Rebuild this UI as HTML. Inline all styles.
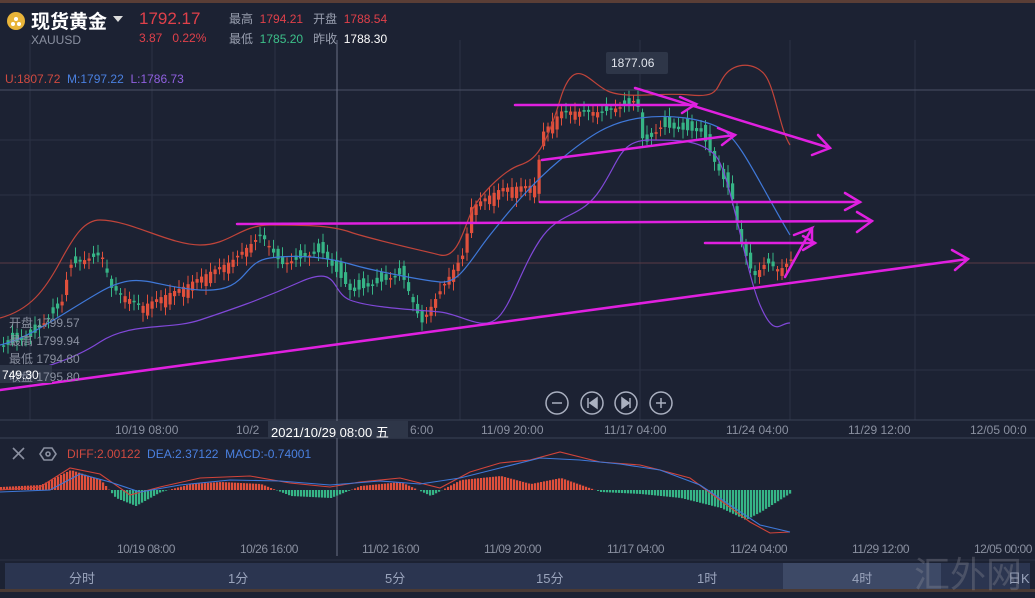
<!DOCTYPE html>
<html><head><meta charset="utf-8"><style>
body{margin:0;background:#1c2233;width:1035px;height:592px;overflow:hidden;font-family:"Liberation Sans","Noto Sans CJK SC",sans-serif;position:relative}
.t{position:absolute;white-space:nowrap}
svg{position:absolute;left:0;top:0}
</style></head><body>
<svg id="s" width="1035" height="592" xmlns="http://www.w3.org/2000/svg">
<rect x="0" y="0" width="1035" height="3" fill="#5a3e36"/>
<g stroke="#2b3245" stroke-width="1">
<line x1="0" y1="140" x2="1035" y2="140"/><line x1="0" y1="195" x2="1035" y2="195"/><line x1="0" y1="315" x2="1035" y2="315"/>
<line x1="0" y1="370" x2="1035" y2="370"/>
<line x1="30" y1="40" x2="30" y2="420"/><line x1="152" y1="40" x2="152" y2="420"/><line x1="275" y1="40" x2="275" y2="420"/><line x1="460" y1="40" x2="460" y2="420"/><line x1="640" y1="40" x2="640" y2="420"/><line x1="790" y1="40" x2="790" y2="420"/><line x1="915" y1="40" x2="915" y2="420"/>
</g>
<line x1="0" y1="90" x2="1035" y2="90" stroke="#4a5064"/>
<line x1="0" y1="263" x2="1035" y2="263" stroke="#5a3a44"/>
<line x1="0" y1="420" x2="1035" y2="420" stroke="#3a4156"/>
<line x1="0" y1="438" x2="1035" y2="438" stroke="#3a4156"/>
<line x1="0" y1="560" x2="1035" y2="560" stroke="#2b3245"/>
<line x1="337" y1="40" x2="337" y2="556" stroke="#6a7084"/>
<g id="cd"></g>
<path fill="none" stroke="#c0443a" stroke-width="1.2" d="M0,318 C30,310 45,290 60,262 S85,220 100,220 C130,220 170,245 200,245 S240,225 270,225 S330,225 350,232 S420,250 440,255 S465,220 475,205 S505,170 520,165 S545,150 560,100 S590,85 610,92 S660,92 690,95 S715,88 725,75 S755,62 765,75 S780,130 790,145"/>
<path fill="none" stroke="#3f78d8" stroke-width="1.2" d="M0,345 C30,338 60,315 100,292 S150,287 200,290 S240,262 270,258 S330,258 350,264 S420,280 440,282 S470,260 490,235 S530,185 560,160 S610,122 640,118 S700,118 720,128 S760,185 790,235"/>
<path fill="none" stroke="#8048d8" stroke-width="1.2" d="M0,378 C30,372 70,362 100,342 S170,330 200,320 S260,300 300,282 S330,292 350,300 S420,310 440,312 S480,330 495,320 S520,270 540,240 S580,220 600,190 S620,140 650,140 S700,140 715,155 S745,270 760,305 S780,322 790,323"/>
<g stroke="#e020e0" stroke-width="2.5" fill="none" stroke-linecap="round">
<line x1="0" y1="390" x2="968" y2="259"/><polyline points="952,250 968,259 955,270"/>
<line x1="515" y1="105" x2="696" y2="105"/><polyline points="680,97 696,104 682,113"/>
<line x1="635" y1="88" x2="830" y2="148"/><polyline points="818,135 830,148 812,155"/>
<line x1="542" y1="160" x2="735" y2="135"/><polyline points="718,128 735,135 722,145"/>
<line x1="540" y1="202" x2="860" y2="202"/><polyline points="845,193 860,202 845,210"/>
<line x1="237" y1="224" x2="872" y2="221"/><polyline points="857,212 872,221 857,232"/>
<line x1="705" y1="243" x2="815" y2="243"/><polyline points="803,236 815,243 803,250"/>
<polyline points="785,277 812,228 794,235"/><line x1="812" y1="228" x2="812" y2="244"/>
</g>
<g id="mh"></g>
<polyline fill="none" stroke="#d2443a" stroke-width="1.1" points="0,490 40,487 70,468 100,474 130,495 160,487 200,478 250,476 290,483 330,487 360,482 400,478 440,488 470,472 500,463 530,460 560,452 600,462 640,465 660,470 690,478 720,500 750,522 770,533 790,532"/>
<polyline fill="none" stroke="#3f78d8" stroke-width="1.1" points="0,492 50,490 80,474 110,482 140,492 180,485 230,480 280,481 330,485 380,481 420,484 460,478 500,468 540,458 580,460 620,464 660,470 700,485 730,505 760,525 790,532"/>
<g fill="none" stroke="#aab0c0" stroke-width="1.5">
<circle cx="557" cy="403" r="11"/><circle cx="592" cy="403" r="11"/><circle cx="626" cy="403" r="11"/><circle cx="661" cy="403" r="11"/>
<line x1="552" y1="403" x2="562" y2="403"/><line x1="656" y1="403" x2="666" y2="403"/><line x1="661" y1="398" x2="661" y2="408"/>
<line x1="588" y1="398" x2="588" y2="408"/><polygon points="597,398 590,403 597,408" fill="#aab0c0"/>
<line x1="630" y1="398" x2="630" y2="408"/><polygon points="622,398 629,403 622,408" fill="#aab0c0"/>
</g>
<g stroke="#8a90a0" stroke-width="1.6" fill="none"><line x1="13" y1="448" x2="24" y2="459"/><line x1="24" y1="448" x2="13" y2="459"/>
<polygon points="44,448 52,448 56,454 52,460 44,460 40,454"/><circle cx="48" cy="454" r="2"/></g>
<rect x="5" y="563" width="1025" height="26" fill="#2b3550"/>
<rect x="783" y="563" width="158" height="26" fill="#3d4966"/>
<rect x="0" y="589" width="1035" height="3" fill="#4a3a34"/>
<circle cx="16" cy="21" r="9" fill="#e8b43a"/>
<g fill="#fff"><circle cx="13" cy="24" r="2"/><circle cx="19" cy="24" r="2"/><circle cx="16" cy="19" r="2"/></g>
<polygon points="113,16 123,16 118,22" fill="#ddd"/>
<rect x="606" y="52" width="62" height="22" rx="2" fill="#2e3648"/>
<rect x="268" y="421" width="140" height="17" fill="#2e3648"/>
<rect x="0" y="365" width="52" height="18" fill="#2e3648"/>
</svg>
<div class="t" style="left:31px;top:7px;font-size:19px;color:#fff;font-weight:bold">现货黄金</div>
<div class="t" style="left:31px;top:33px;font-size:12px;color:#8a90a0">XAUUSD</div>
<div class="t" style="left:139px;top:9px;font-size:17px;color:#e0404a">1792.17</div>
<div class="t" style="left:139px;top:31px;font-size:12px;color:#e0404a">3.87&nbsp;&nbsp;&nbsp;0.22%</div>
<div class="t" style="left:229px;top:10px;font-size:12px;color:#9aa0b0">最高&nbsp;&nbsp;<span style="color:#e0404a">1794.21</span>&nbsp;&nbsp;&nbsp;开盘&nbsp;&nbsp;<span style="color:#e0404a">1788.54</span></div>
<div class="t" style="left:229px;top:30px;font-size:12px;color:#9aa0b0">最低&nbsp;&nbsp;<span style="color:#3cc08a">1785.20</span>&nbsp;&nbsp;&nbsp;昨收&nbsp;&nbsp;<span style="color:#fff">1788.30</span></div>
<div class="t" style="left:5px;top:72px;font-size:12px;color:#d04a40">U:1807.72 <span style="color:#4a80e0">&nbsp;M:1797.22</span> <span style="color:#9060e0">&nbsp;L:1786.73</span></div>
<div class="t" style="left:611px;top:56px;font-size:12px;color:#e0e4ec">1877.06</div>
<div class="t" style="left:9px;top:314px;font-size:12px;color:#8a90a0;line-height:18px">开盘 1799.57<br>最高 1799.94<br>最低 1794.80<br>收盘 1795.80</div>
<div class="t" style="left:2px;top:368px;font-size:12px;color:#fff">749.30</div>
<div class="t" style="top:423px;font-size:12px;color:#8a90a0;left:115px">10/19 08:00</div>
<div class="t" style="top:423px;font-size:12px;color:#8a90a0;left:236px">10/2</div>
<div class="t" style="top:422px;font-size:13px;color:#fff;left:271px">2021/10/29 08:00 五</div>
<div class="t" style="top:423px;font-size:12px;color:#8a90a0;left:410px">6:00</div>
<div class="t" style="top:423px;font-size:12px;color:#8a90a0;left:481px">11/09 20:00</div>
<div class="t" style="top:423px;font-size:12px;color:#8a90a0;left:604px">11/17 04:00</div>
<div class="t" style="top:423px;font-size:12px;color:#8a90a0;left:726px">11/24 04:00</div>
<div class="t" style="top:423px;font-size:12px;color:#8a90a0;left:848px">11/29 12:00</div>
<div class="t" style="top:423px;font-size:12px;color:#8a90a0;left:970px">12/05 00:0</div>
<div class="t" style="left:67px;top:447px;font-size:12px;color:#d04a40">DIFF:2.00122 <span style="color:#4a80e0">&nbsp;DEA:2.37122 &nbsp;MACD:-0.74001</span></div>
<div class="t" style="top:542px;font-size:12px;color:#8a90a0;left:117px;letter-spacing:-0.5px">10/19 08:00</div>
<div class="t" style="top:542px;font-size:12px;color:#8a90a0;left:240px;letter-spacing:-0.5px">10/26 16:00</div>
<div class="t" style="top:542px;font-size:12px;color:#8a90a0;left:362px;letter-spacing:-0.5px">11/02 16:00</div>
<div class="t" style="top:542px;font-size:12px;color:#8a90a0;left:484px;letter-spacing:-0.5px">11/09 20:00</div>
<div class="t" style="top:542px;font-size:12px;color:#8a90a0;left:607px;letter-spacing:-0.5px">11/17 04:00</div>
<div class="t" style="top:542px;font-size:12px;color:#8a90a0;left:730px;letter-spacing:-0.5px">11/24 04:00</div>
<div class="t" style="top:542px;font-size:12px;color:#8a90a0;left:852px;letter-spacing:-0.5px">11/29 12:00</div>
<div class="t" style="top:542px;font-size:12px;color:#8a90a0;left:974px;letter-spacing:-0.5px">12/05 00:00</div>
<div class="t" style="top:568px;font-size:13px;color:#9aa4bc;left:69px">分时</div>
<div class="t" style="top:568px;font-size:13px;color:#9aa4bc;left:228px">1分</div>
<div class="t" style="top:568px;font-size:13px;color:#9aa4bc;left:385px">5分</div>
<div class="t" style="top:568px;font-size:13px;color:#9aa4bc;left:536px">15分</div>
<div class="t" style="top:568px;font-size:13px;color:#9aa4bc;left:697px">1时</div>
<div class="t" style="top:568px;font-size:13px;color:#9aa4bc;left:852px">4时</div>
<div class="t" style="top:568px;font-size:13px;color:#9aa4bc;left:1008px">日K</div>
<div class="t" style="top:546px;font-size:36px;color:rgba(150,150,160,0.3);left:914px">汇外网</div>
<script>
var P=[[0,340],[30,330],[60,300],[68,262],[100,255],[110,290],[140,312],[180,295],[230,265],[260,235],[280,262],[320,245],[350,285],[400,270],[420,322],[440,290],[462,258],[470,212],[500,195],[535,192],[540,140],[560,116],[600,112],[630,100],[635,92],[642,140],[660,120],[700,125],[710,150],[730,190],[740,240],[752,275],[765,262],[778,272],[790,262]];
function py(x){for(var i=1;i<P.length;i++){if(x<=P[i][0]){var a=P[i-1],b=P[i];return a[1]+(b[1]-a[1])*(x-a[0])/(b[0]-a[0]);}}return 262;}
var g=document.getElementById('cd'),h='',s=7;
for(var x=2;x<=790;x+=4.5){var o=py(x-3)+Math.cos(x*3.1)*5,c=py(x)+Math.sin(x*s)*7;var up=c<o;var col=up?'#e0503c':'#36b486';var t=Math.min(o,c),bb=Math.max(o,c);if(bb-t<1.5)bb=t+1.5;
h+='<line x1="'+(x+1.5)+'" y1="'+(t-3-Math.abs(Math.sin(x))*6)+'" x2="'+(x+1.5)+'" y2="'+(bb+3+Math.abs(Math.cos(x))*6)+'" stroke="'+col+'" stroke-width="1"/><rect x="'+x+'" y="'+t+'" width="3.2" height="'+(bb-t)+'" fill="'+col+'"/>';}
g.innerHTML=h;
var M=[[0,3],[40,5],[70,20],[100,10],[115,-8],[135,-16],[160,-2],[190,6],[220,8],[260,6],[290,-6],[330,-8],[360,4],[400,8],[430,-6],[460,10],[500,14],[530,6],[560,12],[600,-2],[640,-4],[680,-8],[720,-18],[745,-30],[760,-22],[790,-3]];
function my(x){for(var i=1;i<M.length;i++){if(x<=M[i][0]){var a=M[i-1],b=M[i];return a[1]+(b[1]-a[1])*(x-a[0])/(b[0]-a[0]);}}return 0;}
var k='';for(var x=0;x<=790;x+=3){var v=my(x);var col=v>0?'#e0503c':'#36b486';k+='<rect x="'+x+'" y="'+(v>0?490-v:490)+'" width="2.2" height="'+Math.abs(v)+'" fill="'+col+'"/>';}
document.getElementById('mh').innerHTML=k;
</script>
</body></html>
